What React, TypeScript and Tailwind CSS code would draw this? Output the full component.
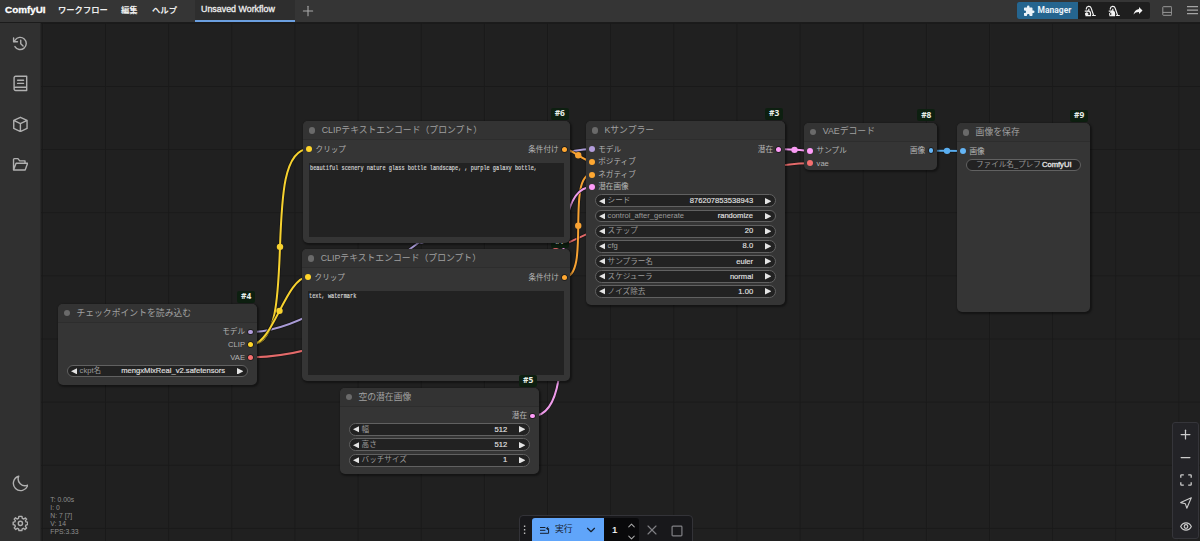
import type { ReactNode } from 'react'
import { ChevronDown, ChevronUp, Minus, Plus, X } from 'lucide-react'
import { MdExtension } from 'react-icons/md'

type Slot = { label: string; dot: string }
type Widget = { label: string; value: string }

interface NodeProps {
  id: number
  title: string
  box: string
  inputs?: Slot[]
  outputs?: Slot[]
  widgets?: Widget[]
  children?: ReactNode
}

const DOT = {
  clip: 'bg-[#ffd52a]',
  model: 'bg-[#b39ddb]',
  vae: 'bg-[#f46f6f]',
  cond: 'bg-[#ffa832]',
  latent: 'bg-[#ff9cf9]',
  image: 'bg-[#64b5f6]',
}

const LINKS = [
  { from: [251, 332], to: [592, 149], color: '#a99bd6' },
  { from: [251, 357.3], to: [810, 163.3], color: '#e46a6a' },
  { from: [251, 344.7], to: [309, 149], color: '#f7d22f' },
  { from: [251, 344.7], to: [308, 277], color: '#f7d22f' },
  { from: [564.5, 149], to: [592, 161.6], color: '#f7a233' },
  { from: [564.5, 277], to: [592, 174.3], color: '#f7a233' },
  { from: [532.5, 416], to: [592, 187], color: '#ee9bea' },
  { from: [779, 149], to: [810, 150.7], color: '#f79bf2' },
  { from: [931, 150.7], to: [963, 151], color: '#5aaef0' },
]

function Links() {
  return (
    <svg className="absolute inset-0" width="1159" height="518" viewBox="41 23 1159 518" fill="none">
      {LINKS.map(({ from: [x1, y1], to: [x2, y2], color }, i) => {
        const d = Math.hypot(x2 - x1, y2 - y1) / 4
        const path = `M${x1},${y1} C${x1 + d},${y1} ${x2 - d},${y2} ${x2},${y2}`
        return (
          <g key={i}>
            <path d={path} stroke="#141414" strokeWidth="3.6" strokeOpacity="0.7"/>
            <path d={path} stroke={color} strokeWidth="2"/>
            <circle cx={(x1 + x2) / 2} cy={(y1 + y2) / 2} r="3.2" fill={color}/>
          </g>
        )
      })}
    </svg>
  )
}

function SlotRow({ input, output }: { input?: Slot; output?: Slot }) {
  return (
    <div className="flex h-[12.63px] items-center justify-between pl-[2.7px] pr-[3px] text-[#b4b4b4]">
      <div className="flex items-center gap-[3.6px]">
        {input && (
          <>
            <span className={`size-[6px] rounded-full ${input.dot}`}/>
            <span>{input.label}</span>
          </>
        )}
      </div>
      <div className="flex items-center gap-[3.4px]">
        {output && (
          <>
            <span>{output.label}</span>
            <span className={`mr-[0.5px] size-[4.8px] rounded-full shadow-[0_0_0_0.7px_#181818] ${output.dot}`}/>
          </>
        )}
      </div>
    </div>
  )
}

function Arrow({ flip = false }: { flip?: boolean }) {
  return (
    <svg width="6.6" height="6.6" viewBox="0 0 6 6" className="shrink-0" fill="#e4e4e4">
      <path d={flip ? 'M0 0L6 3L0 6Z' : 'M6 0L0 3L6 6Z'}/>
    </svg>
  )
}

function WidgetRow({ label, value }: Widget) {
  return (
    <div className="ml-[8.8px] mr-[9.2px] flex h-[12.9px] items-center rounded-full border-[0.8px] border-[#616161] bg-[#222] pl-[3px] pr-[3.3px]">
      <Arrow/>
      <span className="pl-[2.2px] text-[#9c9c9c]">{label}</span>
      <span className="ml-auto pr-[11.5px] text-[#dedede] [-webkit-text-stroke:0.2px_#dedede]">{value}</span>
      <Arrow flip/>
    </div>
  )
}

function GraphNode({ id, title, box, inputs = [], outputs = [], widgets = [], children }: NodeProps) {
  const rows = Math.max(inputs.length, outputs.length)
  return (
    <div className={`absolute ${box}`}>
      <div className="absolute -top-[13.7px] right-[1.5px] flex h-[12px] w-[18px] items-center justify-center rounded-[2px] bg-[#0d1f10] font-['Open_Sans',sans-serif] text-[8.4px] font-bold text-[#e8efe8]">
        #{id}
      </div>
      <div className="relative flex size-full flex-col overflow-hidden rounded-[5px] bg-[#353535] text-[7.6px] leading-none whitespace-nowrap shadow-[1px_1px_2px_1px_rgba(0,0,0,0.4)]">
        <div className="flex h-[19px] shrink-0 items-center gap-[6.2px] border-b border-[#2d2d2d] bg-[#333] pl-[5.8px] text-[8.84px] text-[#a0a0a0]">
          <span className="size-[6.4px] rounded-full bg-[#6a6a6a]"/>
          {title}
        </div>
        <div className="pt-[2.6px]">
          {Array.from({ length: rows }, (_, i) => (
            <SlotRow key={i} input={inputs[i]} output={outputs[i]}/>
          ))}
        </div>
        {widgets.length > 0 && (
          <div className="flex flex-col gap-[2.27px] pt-[0.9px]">
            {widgets.map(w => <WidgetRow key={w.label} {...w}/>)}
          </div>
        )}
        {children}
      </div>
    </div>
  )
}

function Prompt({ text }: { text: string }) {
  return (
    <div className="mx-[6px] mt-[7.3px] mb-[6.5px] flex-1 bg-[#222] pt-[1px] pl-[1px] text-[#d4d4d4]">
      <span className="inline-block origin-top-left scale-x-[0.72] font-['Liberation_Mono',monospace] text-[7.3px] leading-[8px] [-webkit-text-stroke:0.2px_#d4d4d4]">
        {text}
      </span>
    </div>
  )
}

const SIDE_ICONS: Record<string, ReactNode> = {
  history: (
    <>
      <path d="M4.2 16.5A8.7 8.7 0 1 0 4.4 7.3L2.8 9.3"/>
      <path d="M2.3 4.2V9.6H7.8M12.5 7.5V12.4L15.8 15.6"/>
    </>
  ),
  queue: (
    <>
      <path d="M5.2 1.8H21V22.2H5.2A2.2 2.2 0 0 1 3 20V4A2.2 2.2 0 0 1 5.2 1.8ZM3 19.6A2.2 2.2 0 0 1 5.2 17.4H21"/>
      <path d="M8 7.4H16.5M8 12H16.5"/>
    </>
  ),
  model: <path d="M12 1.8L21.5 6.3V17.7L12 22.2L2.5 17.7V6.3ZM2.5 6.3L12 11L21.5 6.3M12 11V22.2"/>,
  folder: <path d="M2.2 20V5A1.2 1.2 0 0 1 3.4 3.8H8.5L11 7H18.6V10.4M2.2 20L5.8 10.4H22.3L18.8 20H2.2Z"/>,
  moon: <path d="M9.6 1.8A10.4 10.4 0 1 0 22.4 14.6A9.8 9.8 0 0 1 9.6 1.8Z"/>,
  gear: (
    <>
      <circle cx="12" cy="12" r="3"/>
      <path d="M9.8 2H14.2L14.7 4.8L16.9 5.7L19.2 4.1L20.9 5.9L19.2 8L20 9.9L22.3 10.2V13.8L20 14.2L19.2 16.2L20.8 18.4L18.5 20.6L16.4 19L14.6 19.8L14.1 22.2H9.9L9.4 19.8L7.6 19L5.4 20.6L3.2 18.4L4.8 16.2L4 14.2L1.7 13.8V10.2L4 9.9L4.8 8L3.1 5.9L5 4L7.2 5.7L9.3 4.8Z"/>
    </>
  ),
}

function SideIcon({ name }: { name: string }) {
  return (
    <button className="flex h-[40.4px] w-full shrink-0 items-center justify-center">
      <svg width="16.8" height="16.8" viewBox="0 0 24 24" fill="none" stroke="#b0b0b0"
           strokeWidth="2" strokeLinecap="round" strokeLinejoin="round">
        {SIDE_ICONS[name]}
      </svg>
    </button>
  )
}

function Vacuum({ filled = false }: { filled?: boolean }) {
  return (
    <svg width="12" height="12" viewBox="0 0 24 24" fill="none" stroke="#f4f4f4" strokeWidth="2.4">
      <path d="M4.6 9V7.6A5 5 0 0 1 14.3 6.2L19.2 20.8M16.2 21H23.5"/>
      <path d="M3 21.2H13V16.6A4.6 4.6 0 0 0 8.6 12.2H6" fill={filled ? '#f4f4f4' : 'none'}/>
      <path d="M9.6 12V7.6"/>
      <circle cx="5.4" cy="18" r="2.6" fill={filled ? '#1e1e1e' : '#f4f4f4'} strokeWidth="1.8"/>
      <path d="M1.5 12.2H7"/>
    </svg>
  )
}

function TopBar() {
  return (
    <header className="flex h-[23px] shrink-0 items-start border-b border-[#1b1b1b] bg-[#353535] text-[8.4px] text-[#eee]">
      <div className="flex h-[20px] w-[195px] items-center pl-[5px] font-bold whitespace-nowrap">
        <span className="w-[53px] font-['Liberation_Sans',sans-serif] text-[9.9px] text-white [-webkit-text-stroke:0.3px_#fff]">ComfyUI</span>
        <span className="w-[63px] text-[8.3px]">ワークフロー</span>
        <span className="w-[31px]">編集</span>
        <span>ヘルプ</span>
      </div>
      <div className="flex h-[22px] w-[99.5px] items-center border-b-2 border-[#6b9fe0] bg-[#2e2e2e] pb-[1px] pl-[6px] text-[8.9px] whitespace-nowrap [-webkit-text-stroke:0.3px_#eee]">
        Unsaved Workflow
      </div>
      <Plus className="mt-[3px] ml-[5px] text-[#aaa]" size={16} strokeWidth={1.6}/>
      <div className="mt-[2px] mr-[12px] ml-auto flex h-[17px] overflow-hidden rounded-[2px] bg-[#1e1e1e]">
        <button className="flex w-[61px] items-center gap-[3px] bg-[#25658f] pl-[6px] font-[Roboto,sans-serif] text-[8.5px] font-bold text-[#eaf2f8]">
          <MdExtension size={12} className="shrink-0"/>
          Manager
        </button>
        <button className="flex w-[24px] items-center justify-center"><Vacuum/></button>
        <button className="flex w-[24px] items-center justify-center"><Vacuum filled/></button>
        <button className="flex w-[24px] items-center justify-center">
          <svg width="12" height="12" viewBox="0 0 24 24" fill="#f4f4f4">
            <path d="M21,11L14,4V8C7,9 4,14 3,19C5.5,15.5 9,13.9 14,13.9V18L21,11Z"/>
          </svg>
        </button>
      </div>
      <svg className="mt-[5.5px] mr-[15px] shrink-0" width="10.5" height="10" viewBox="0 0 10.5 10" fill="none" stroke="#999">
        <rect x="0.8" y="0.7" width="8.9" height="8.6" rx="0.6"/>
        <path d="M0.8 6.4H9.7"/>
      </svg>
      <svg className="mt-[5px] mr-[2px] shrink-0" width="11" height="11" viewBox="0 0 11 11" stroke="#a5a5a5" strokeWidth="1.3">
        <path d="M0 1.7H11M0 5.2H11M0 8.7H11"/>
      </svg>
    </header>
  )
}

function ActionBar() {
  return (
    <div className="absolute top-[492px] left-[478px] flex h-[30px] w-[174px] items-start rounded-[4px] border border-[#333338] bg-[#18181b] pt-[2px]">
      <svg className="shrink-0" width="12" height="24" viewBox="0 0 12 24" fill="#bbb">
        <path d="M3.9 7.6H5.3V9H3.9ZM3.9 11.1H5.3V12.5H3.9ZM3.9 14.6H5.3V16H3.9Z"/>
      </svg>
      <button className="flex h-[25px] w-[72px] shrink-0 items-center rounded-l-[3px] bg-[#60a5fa] pb-[1px] pl-[8px] text-[8.8px] text-[#15202f]">
        <svg width="10" height="9" viewBox="0 0 10 9" fill="none" stroke="currentColor">
          <path d="M0 1.5H5.4M0 4.3H5.4M0 7.3H8.6V2.5H6.8M8 .8L6.4 2.5L8 4.2"/>
        </svg>
        <span className="ml-[5px]">実行</span>
        <ChevronDown className="ml-auto mr-[6px]" size={14} strokeWidth={2}/>
      </button>
      <div className="flex h-[25px] w-[35px] shrink-0 items-center justify-between rounded-r-[3px] bg-[#09090b] pr-[2.5px] pb-[1px] pl-[8px] text-[9.8px] text-white [-webkit-text-stroke:0.2px_#fff]">
        1
        <div className="flex flex-col gap-[1px] pt-[2px] text-[#aaa]">
          <ChevronUp size={11} strokeWidth={2.2}/>
          <ChevronDown size={11} strokeWidth={2.2}/>
        </div>
      </div>
      <X className="mt-[4px] ml-[5px] shrink-0 text-[#808085]" size={16} strokeWidth={1.7}/>
      <svg className="mt-[6.5px] ml-[11px] shrink-0" width="12" height="12" viewBox="0 0 11 11" fill="none" stroke="#808085" strokeWidth="1.1">
        <rect x="1" y="1" width="9" height="9" rx="0.8"/>
      </svg>
    </div>
  )
}

function ViewControls() {
  return (
    <div className="absolute top-[399px] left-[1131px] flex h-[117px] w-[27px] flex-col rounded-[3px] border border-[#35353a] bg-[#232327] text-[#ccc]">
      <button className="flex h-[22.9px] items-center justify-center"><Plus size={15} strokeWidth={2}/></button>
      <button className="flex h-[22.9px] items-center justify-center"><Minus size={15} strokeWidth={2}/></button>
      <button className="flex h-[22.9px] items-center justify-center">
        <svg width="12" height="12" viewBox="0 0 12 12" fill="none" stroke="currentColor" strokeWidth="1.3">
          <path d="M0.8 3.8V1.6A.8 .8 0 0 1 1.6 .8H3.8M8.2 .8H10.4A.8 .8 0 0 1 11.2 1.6V3.8M11.2 8.2V10.4A.8 .8 0 0 1 10.4 11.2H8.2M3.8 11.2H1.6A.8 .8 0 0 1 .8 10.4V8.2"/>
        </svg>
      </button>
      <button className="flex h-[22.9px] items-center justify-center">
        <svg width="12" height="12" viewBox="0 0 12 12" fill="none" stroke="currentColor" strokeWidth="1.1" strokeLinejoin="round">
          <path d="M11.3 0.7L.7 5.6L5.4 6.8L6.8 11.2Z"/>
        </svg>
      </button>
      <button className="flex h-[22.9px] items-center justify-center">
        <svg width="12" height="9" viewBox="0 0 12 9" fill="none" stroke="currentColor" strokeWidth="1.2">
          <path d="M.7 4.5C3 -.3 9 -.3 11.3 4.5C9 9.3 3 9.3 .7 4.5Z"/>
          <circle cx="6" cy="4.5" r="1.8"/>
        </svg>
      </button>
    </div>
  )
}

export default function App() {
  return (
    <div className="flex h-[541px] w-[1200px] flex-col overflow-hidden bg-[#202020] font-['Liberation_Sans','Noto_Sans_CJK_JP',sans-serif]">
      <TopBar/>
      <div className="flex min-h-0 flex-1">
        <nav className="flex w-[41px] shrink-0 flex-col border-r border-[#272727] bg-[#303030]">
          <SideIcon name="history"/>
          <SideIcon name="queue"/>
          <SideIcon name="model"/>
          <SideIcon name="folder"/>
          <div className="mt-auto -mb-[3px]">
            <SideIcon name="moon"/>
            <SideIcon name="gear"/>
          </div>
        </nav>

        <main className="relative flex-1 overflow-hidden">
          {/* Grid */}
          <svg className="absolute inset-0" width="1159" height="518">
            <defs>
              <pattern id="minor" x="0.9" y="-0.2" width="6.314" height="6.314" patternUnits="userSpaceOnUse">
                <path d="M0 0H6.314M0 0V6.314" stroke="#1c1c1c" strokeWidth="0.5"/>
              </pattern>
              <pattern id="major" x="0.9" y="-0.2" width="63.14" height="63.14" patternUnits="userSpaceOnUse">
                <path d="M0 .5H63.14M.5 0V63.14" stroke="#191919"/>
              </pattern>
            </defs>
            <rect width="1159" height="518" fill="url(#minor)" opacity="0.3"/>
            <rect width="1159" height="518" fill="url(#major)"/>
          </svg>
          <Links/>

          <GraphNode
            id={4}
            title="チェックポイントを読み込む"
            box="left-[17px] top-[281.2px] h-[80.5px] w-[198.7px]"
            outputs={[
              { label: 'モデル', dot: DOT.model },
              { label: 'CLIP', dot: DOT.clip },
              { label: 'VAE', dot: DOT.vae },
            ]}
            widgets={[{ label: 'ckpt名', value: 'mengxMixReal_v2.safetensors' }]}
          />
          <GraphNode
            id={7}
            title="CLIPテキストエンコード（プロンプト）"
            box="left-[261.3px] top-[226.4px] h-[132px] w-[268.2px]"
            inputs={[{ label: 'クリップ', dot: DOT.clip }]}
            outputs={[{ label: '条件付け', dot: DOT.cond }]}
          >
            <Prompt text="text, watermark"/>
          </GraphNode>
          <GraphNode
            id={6}
            title="CLIPテキストエンコード（プロンプト）"
            box="left-[262.3px] top-[98.4px] h-[122px] w-[267px]"
            inputs={[{ label: 'クリップ', dot: DOT.clip }]}
            outputs={[{ label: '条件付け', dot: DOT.cond }]}
          >
            <Prompt text="beautiful scenery nature glass bottle landscape, , purple galaxy bottle,"/>
          </GraphNode>
          <GraphNode
            id={5}
            title="空の潜在画像"
            box="left-[299px] top-[365.2px] h-[85.5px] w-[198.7px]"
            outputs={[{ label: '潜在', dot: DOT.latent }]}
            widgets={[
              { label: '幅', value: '512' },
              { label: '高さ', value: '512' },
              { label: 'バッチサイズ', value: '1' },
            ]}
          />
          <GraphNode
            id={3}
            title="Kサンプラー"
            box="left-[545px] top-[98.4px] h-[183.5px] w-[198.7px]"
            inputs={[
              { label: 'モデル', dot: DOT.model },
              { label: 'ポジティブ', dot: DOT.cond },
              { label: 'ネガティブ', dot: DOT.cond },
              { label: '潜在画像', dot: DOT.latent },
            ]}
            outputs={[{ label: '潜在', dot: DOT.latent }]}
            widgets={[
              { label: 'シード', value: '876207853538943' },
              { label: 'control_after_generate', value: 'randomize' },
              { label: 'ステップ', value: '20' },
              { label: 'cfg', value: '8.0' },
              { label: 'サンプラー名', value: 'euler' },
              { label: 'スケジューラ', value: 'normal' },
              { label: 'ノイズ除去', value: '1.00' },
            ]}
          />
          <GraphNode
            id={8}
            title="VAEデコード"
            box="left-[763.3px] top-[99.8px] h-[47.3px] w-[132.5px]"
            inputs={[
              { label: 'サンプル', dot: DOT.latent },
              { label: 'vae', dot: DOT.vae },
            ]}
            outputs={[{ label: '画像', dot: DOT.image }]}
          />
          <GraphNode
            id={9}
            title="画像を保存"
            box="left-[916.2px] top-[100.4px] h-[189px] w-[132.5px]"
            inputs={[{ label: '画像', dot: DOT.image }]}
          >
            <div className="ml-[8.8px] mr-[9.2px] mt-[0.9px] flex h-[12.9px] shrink-0 items-center rounded-full border-[0.8px] border-[#616161] bg-[#222] pl-[9px] pr-[8px] text-[#999]">
              ファイル名_プレフ
              <span className="ml-auto text-[#e0e0e0] [-webkit-text-stroke:0.35px_#e0e0e0]">ComfyUI</span>
            </div>
          </GraphNode>

          {/* Render stats */}
          <div className="absolute top-[472.5px] left-[9.3px] text-[6.8px] leading-[8.2px] text-[#8f8f8f]">
            <p>T: 0.00s</p>
            <p>I: 0</p>
            <p>N: 7 [7]</p>
            <p>V: 14</p>
            <p>FPS:3.33</p>
          </div>

          <ActionBar/>
          <ViewControls/>
        </main>
      </div>
    </div>
  )
}
